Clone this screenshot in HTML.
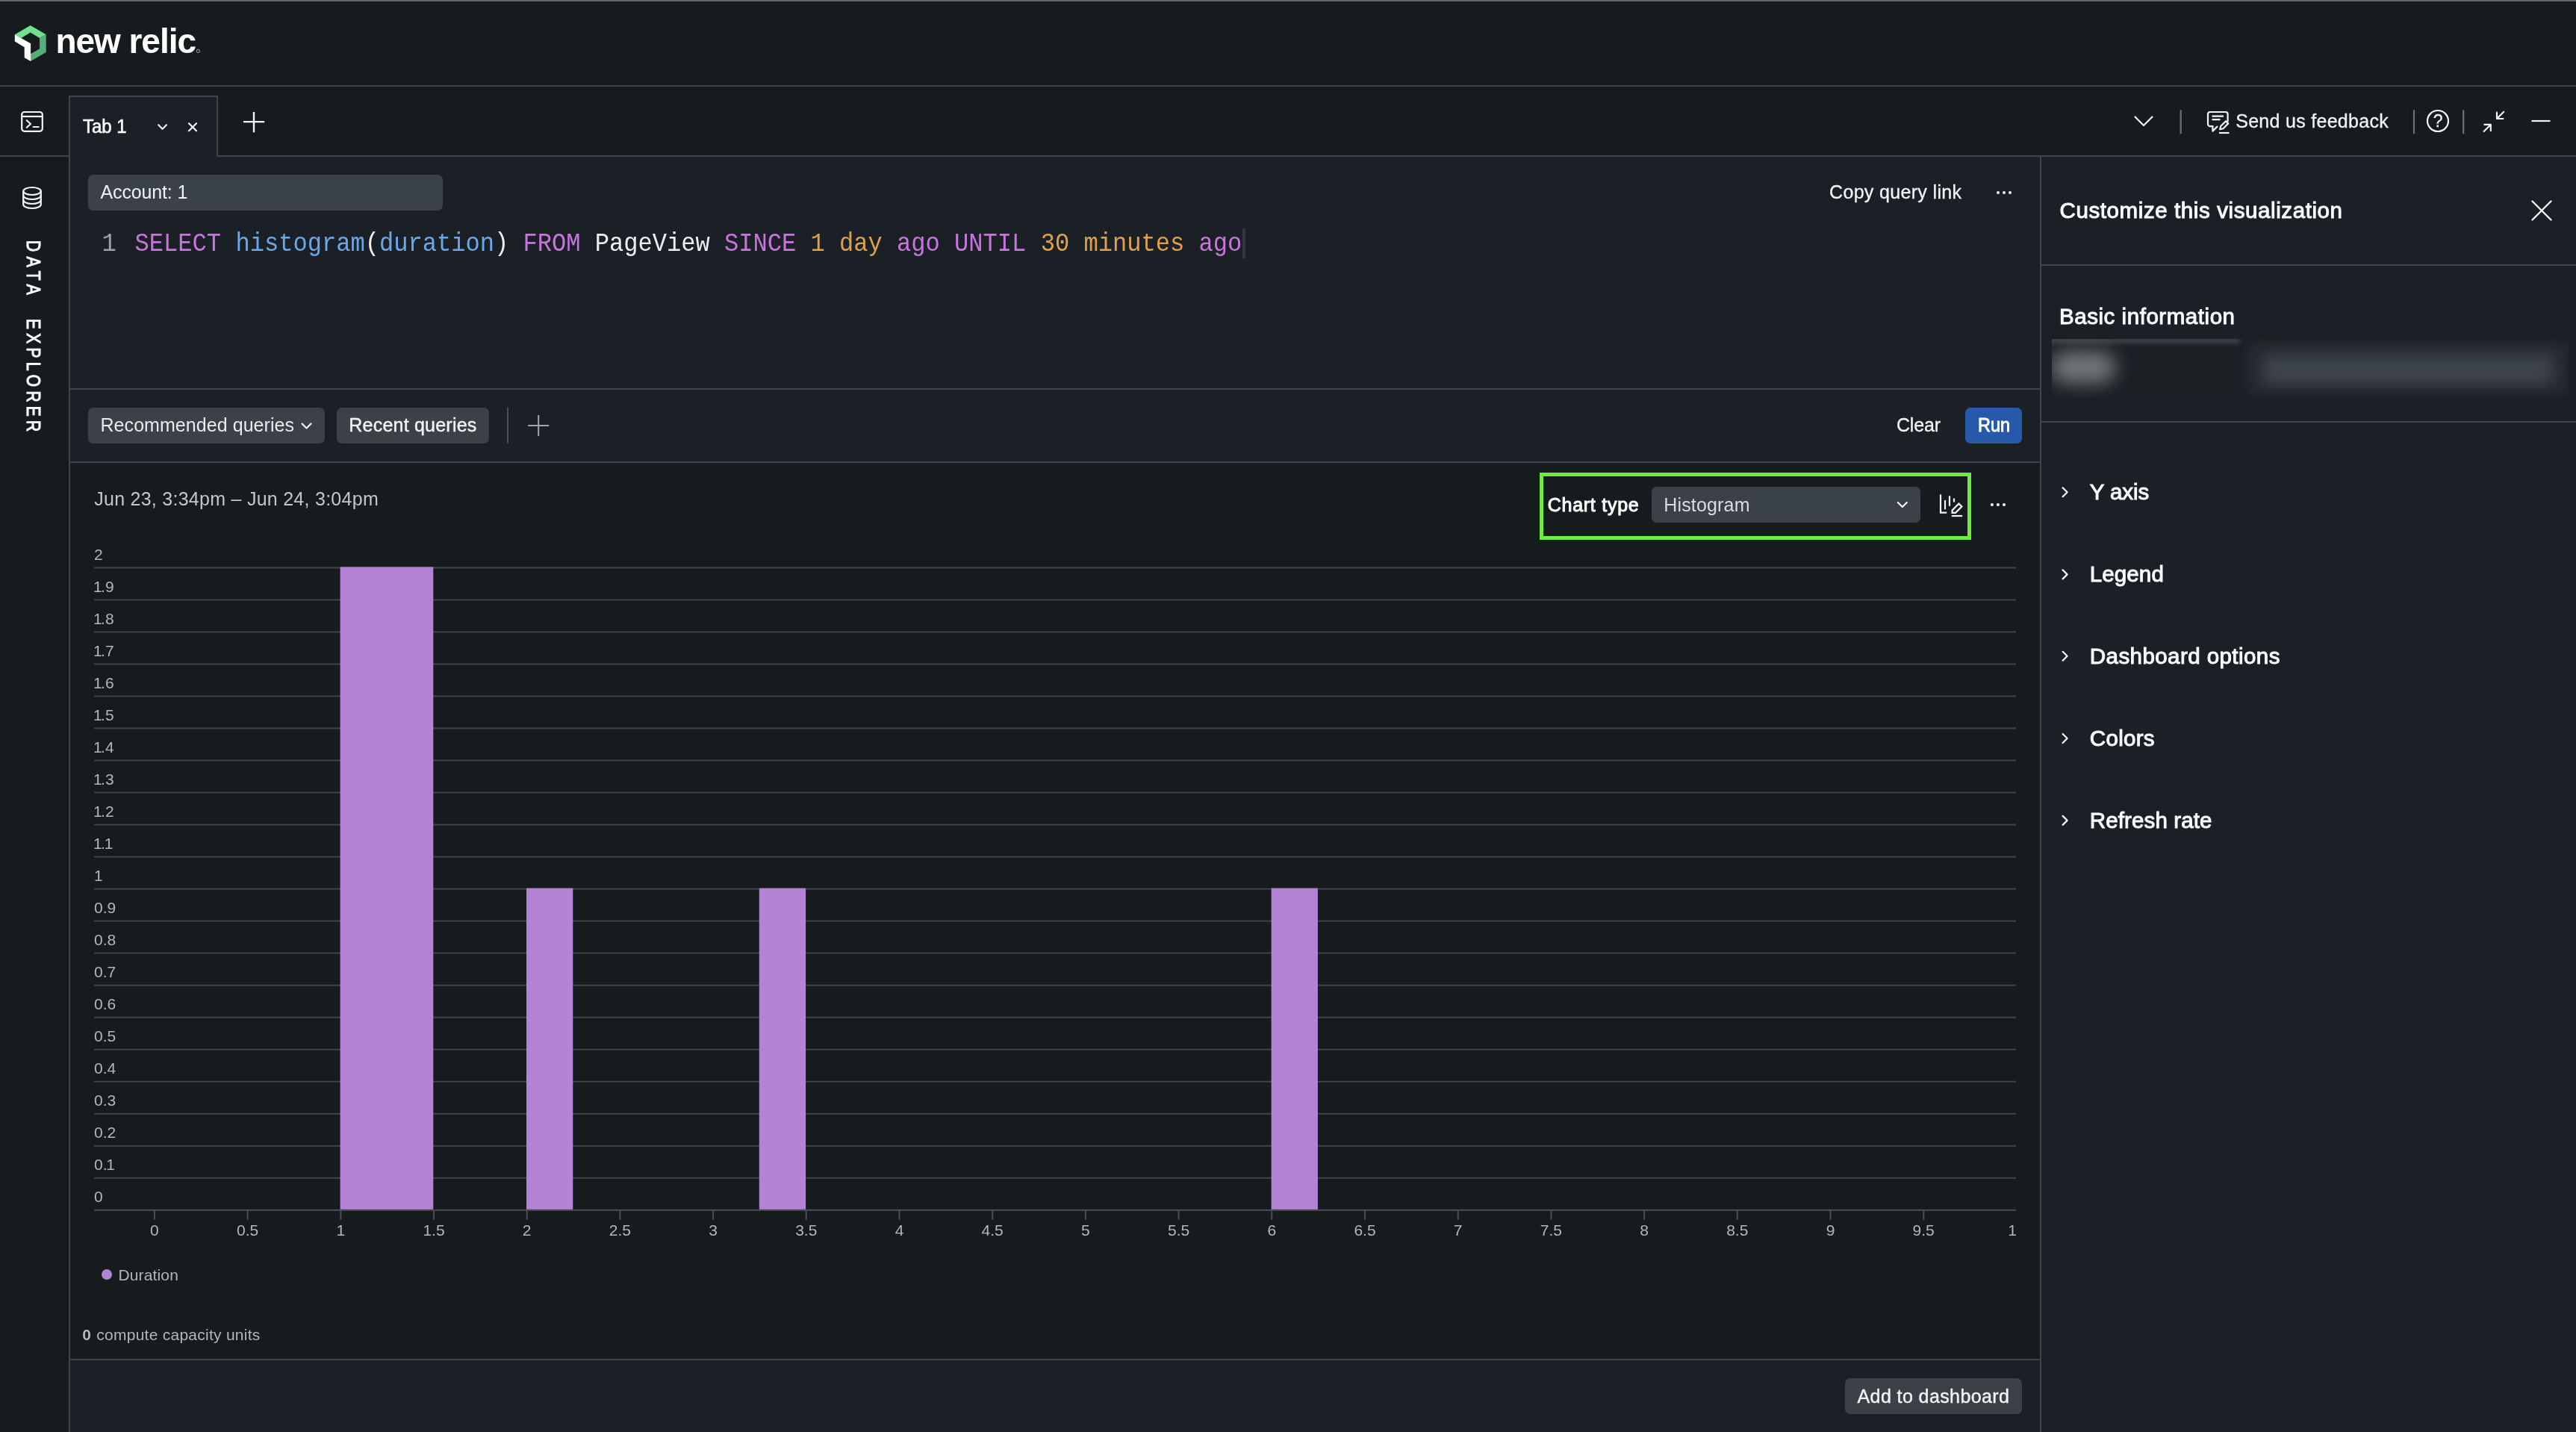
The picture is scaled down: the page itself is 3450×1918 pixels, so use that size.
<!DOCTYPE html>
<html><head><meta charset="utf-8"><title>New Relic - Query builder</title>
<style>
html,body{margin:0;padding:0;}
body{width:3450px;height:1918px;overflow:hidden;background:#161b1e;font-family:"Liberation Sans",sans-serif;position:relative;}
.b{position:absolute;display:block;}
.t{position:absolute;white-space:pre;display:block;}
#tl{position:absolute;left:0;top:0;width:3450px;height:1918px;will-change:transform;}
.code{font-family:"Liberation Mono",monospace;}
.k{color:#c775dc}.f{color:#69a7e8}.p{color:#eceef0}.n{color:#e0a04a}
</style></head><body>
<div class="b" style="left:0px;top:0px;width:3450px;height:1918px;background:#161b1e;"></div>
<div class="b" style="left:0px;top:0px;width:3450px;height:2px;background:#676868;"></div>
<div class="b" style="left:0px;top:2px;width:3450px;height:1px;background:#11161a;"></div>
<div class="b" style="left:0px;top:114px;width:3450px;height:2px;background:#3e434c;"></div>
<div class="b" style="left:0px;top:208px;width:3450px;height:2px;background:#3e434c;"></div>
<div class="b" style="left:94px;top:210px;width:2638px;height:310px;background:#1b2027;"></div>
<div class="b" style="left:94px;top:520px;width:2638px;height:2px;background:#3e434c;"></div>
<div class="b" style="left:94px;top:522px;width:2638px;height:96px;background:#1b2027;"></div>
<div class="b" style="left:94px;top:618px;width:2638px;height:2px;background:#3e434c;"></div>
<div class="b" style="left:94px;top:1820px;width:2638px;height:2px;background:#3e434c;"></div>
<div class="b" style="left:94px;top:1822px;width:2638px;height:96px;background:#1b2027;"></div>
<div class="b" style="left:92px;top:210px;width:2px;height:1708px;background:#3e434c;"></div>
<div class="b" style="left:2734px;top:210px;width:716px;height:1708px;background:#1b2027;"></div>
<div class="b" style="left:2732px;top:210px;width:2px;height:1708px;background:#3e434c;"></div>
<div class="b" style="left:2734px;top:354px;width:716px;height:2px;background:#3e434c;"></div>
<div class="b" style="left:2734px;top:564px;width:716px;height:2px;background:#3e434c;"></div>
<div class="b" style="left:92px;top:128px;width:200px;height:82px;background:#1b2027;box-sizing:border-box;border:2px solid #3e434c;border-bottom:none;"></div>
<svg class="b" style="left:0;top:0" width="300" height="114" viewBox="0 0 300 114">
<polygon points="19.8,46.3 40.7,33.9 61.7,46.3 53.1,50.9 40.7,43.6 28.4,50.9" fill="#70e08f"/>
<polygon points="61.7,46.3 61.7,69.9 40.9,82 40.9,72.2 53.1,65.2 53.1,50.9" fill="#55ae79"/>
<polygon points="19.8,46.3 41.1,58.2 41.1,82 32.7,77.2 32.7,63.2 19.8,55.4" fill="#ffffff"/>
<circle cx="265.4" cy="68.4" r="2.1" fill="none" stroke="#b9bcbe" stroke-width="0.9"/>
</svg>
<svg class="b" style="left:24px;top:145px" width="40" height="36" viewBox="24 145 40 36" fill="none" stroke="#f3f4f5" stroke-width="2.2" stroke-linecap="round" stroke-linejoin="round">
<rect x="29.2" y="150" width="27.6" height="25.8" rx="3.5"/>
<path d="M29.2 156h27.6" stroke-linecap="butt"/>
<path d="M35.8 161.2l5.2 4.8-5.2 4.8M44.6 170h7"/>
</svg>
<svg class="b" style="left:200px;top:150px" width="170" height="40" viewBox="200 150 170 40" fill="none" stroke="#f3f4f5" stroke-width="2.2" stroke-linecap="round" stroke-linejoin="round">
<path d="M212.2 167.3l5.4 5.4 5.4-5.4"/>
<path d="M253 165.2l10 10M263 165.2l-10 10"/>
<path d="M340 149v28.3M325.9 163.1h28.3" stroke-width="2.4" stroke-linecap="butt"/>
</svg>
<svg class="b" style="left:2840px;top:140px" width="600" height="46" viewBox="2840 140 600 46" fill="none" stroke="#f3f4f5" stroke-width="2.2" stroke-linecap="round" stroke-linejoin="round">
<path d="M2859.5 156.5l11.5 11.5 11.5-11.5"/>
<path d="M2920.7 147.2v32M3233 147.2v32M3299.2 147.2v32" stroke="#6c7276" stroke-linecap="butt"/>
<!-- feedback -->
<path d="M2963.4 169.2h-3.4a3 3 0 0 1-3-3v-13.2a3 3 0 0 1 3-3h20.6a3 3 0 0 1 3 3v9.5"/>
<path d="M2963.4 169.2v6.4l6-6"/>
<path d="M2962.5 155.6h15.5M2962.5 160.2h11" stroke-linecap="butt"/>
<path d="M2973.2 173.2l1-4.2 6.8-6.8 3.2 3.2-6.8 6.8z"/>
<path d="M2972 178h13.5" stroke-linecap="butt"/>
<!-- help -->
<circle cx="3265" cy="162" r="14"/>
<!-- collapse -->
<path d="M3353.2 149.8l-9 9M3344 150.6v8.4h8.4"/>
<path d="M3326.6 176l9-9M3335.8 175.2v-8.4h-8.4"/>
<!-- minus -->
<path d="M3390.5 162h25" stroke-linecap="butt"/>
</svg>
<svg class="b" style="left:24px;top:244px" width="40" height="42" viewBox="24 244 40 42" fill="none" stroke="#f3f4f5" stroke-width="2.2" stroke-linecap="round" stroke-linejoin="round">
<ellipse cx="43" cy="256" rx="11.8" ry="5"/>
<path d="M31.2 256v18c0 2.8 5.3 5 11.8 5s11.8-2.2 11.8-5v-18"/>
<path d="M31.2 262c0 2.8 5.3 5 11.8 5s11.8-2.2 11.8-5M31.2 268c0 2.8 5.3 5 11.8 5s11.8-2.2 11.8-5"/>
</svg>
<div class="b" style="left:118px;top:234px;width:475px;height:48px;background:#3b4148;border-radius:7px;"></div>
<svg class="b" style="left:2660px;top:240px" width="50" height="40" viewBox="2660 240 50 40" fill="#f3f4f5"><circle cx="2676" cy="258" r="2"/><circle cx="2684" cy="258" r="2"/><circle cx="2692" cy="258" r="2"/></svg>
<div class="b" style="left:1664.2px;top:306px;width:3.6px;height:40px;background:#33383e;"></div>
<div class="b" style="left:118px;top:546px;width:317px;height:48px;background:#3b4147;border-radius:7px;"></div>
<div class="b" style="left:451px;top:546px;width:204px;height:48px;background:#3b4147;border-radius:7px;"></div>
<div class="b" style="left:679px;top:546px;width:2px;height:48px;background:#4a4f57;"></div>
<svg class="b" style="left:390px;top:540px" width="360" height="60" viewBox="390 540 360 60" fill="none" stroke="#f3f4f5" stroke-width="2.2" stroke-linecap="round" stroke-linejoin="round">
<path d="M404.5 567.5l6 6 6-6"/>
<path d="M721.2 556v28M707.2 570h28" stroke="#a3a7ab" stroke-width="2" stroke-linecap="butt"/>
</svg>
<div class="b" style="left:2632px;top:546px;width:76px;height:48px;background:#2759ab;border-radius:7px;"></div>
<div class="b" style="left:2061.6px;top:633.2px;width:578.8px;height:89.6px;background:transparent;box-sizing:border-box;border:5.4px solid #70ea42;"></div>
<div class="b" style="left:2212px;top:652px;width:360px;height:48px;background:#3b4148;border-radius:7px;"></div>
<svg class="b" style="left:2530px;top:650px" width="170" height="52" viewBox="2530 650 170 52" fill="none" stroke="#f3f4f5" stroke-width="2.2" stroke-linecap="round" stroke-linejoin="round">
<path d="M2541.8 673l6 6 6-6"/>
<path d="M2599 662.2v24.4h8.2" stroke-linecap="butt" stroke-linejoin="miter"/>
<path d="M2605 670v12.2M2611 664.2v13.6M2617 667.6v5" stroke-linecap="butt"/>
<path d="M2614.6 686.8v-3.4l8.8-8.8 3.9 3.9-8.3 8.3z" stroke-width="2.2" stroke-linejoin="miter"/>
<path d="M2613.8 691h14.4" stroke-linecap="butt"/>
<g fill="#f3f4f5" stroke="none"><circle cx="2667.9" cy="676" r="2.1"/><circle cx="2675.9" cy="676" r="2.1"/><circle cx="2684" cy="676" r="2.1"/></g>
</svg>
<svg class="b" style="left:0;top:620px" width="2732" height="1200" viewBox="0 620 2732 1200"><rect x="126" y="1576.8" width="2574" height="2" fill="#40454d"/><rect x="126" y="1533.8" width="2574" height="2" fill="#40454d"/><rect x="126" y="1490.7" width="2574" height="2" fill="#40454d"/><rect x="126" y="1447.7" width="2574" height="2" fill="#40454d"/><rect x="126" y="1404.7" width="2574" height="2" fill="#40454d"/><rect x="126" y="1361.7" width="2574" height="2" fill="#40454d"/><rect x="126" y="1318.7" width="2574" height="2" fill="#40454d"/><rect x="126" y="1275.6" width="2574" height="2" fill="#40454d"/><rect x="126" y="1232.6" width="2574" height="2" fill="#40454d"/><rect x="126" y="1189.6" width="2574" height="2" fill="#40454d"/><rect x="126" y="1146.6" width="2574" height="2" fill="#40454d"/><rect x="126" y="1103.6" width="2574" height="2" fill="#40454d"/><rect x="126" y="1060.5" width="2574" height="2" fill="#40454d"/><rect x="126" y="1017.5" width="2574" height="2" fill="#40454d"/><rect x="126" y="974.5" width="2574" height="2" fill="#40454d"/><rect x="126" y="931.5" width="2574" height="2" fill="#40454d"/><rect x="126" y="888.5" width="2574" height="2" fill="#40454d"/><rect x="126" y="845.4" width="2574" height="2" fill="#40454d"/><rect x="126" y="802.4" width="2574" height="2" fill="#40454d"/><rect x="126" y="759.4" width="2574" height="2" fill="#40454d"/><rect x="126" y="1619.8" width="2574" height="2" fill="#4a4f57"/><rect x="205.9" y="1620.8" width="2" height="13" fill="#4a4f57"/><rect x="330.6" y="1620.8" width="2" height="13" fill="#4a4f57"/><rect x="455.3" y="1620.8" width="2" height="13" fill="#4a4f57"/><rect x="580.0" y="1620.8" width="2" height="13" fill="#4a4f57"/><rect x="704.7" y="1620.8" width="2" height="13" fill="#4a4f57"/><rect x="829.4" y="1620.8" width="2" height="13" fill="#4a4f57"/><rect x="954.1" y="1620.8" width="2" height="13" fill="#4a4f57"/><rect x="1078.8" y="1620.8" width="2" height="13" fill="#4a4f57"/><rect x="1203.5" y="1620.8" width="2" height="13" fill="#4a4f57"/><rect x="1328.2" y="1620.8" width="2" height="13" fill="#4a4f57"/><rect x="1452.9" y="1620.8" width="2" height="13" fill="#4a4f57"/><rect x="1577.6" y="1620.8" width="2" height="13" fill="#4a4f57"/><rect x="1702.3" y="1620.8" width="2" height="13" fill="#4a4f57"/><rect x="1827.0" y="1620.8" width="2" height="13" fill="#4a4f57"/><rect x="1951.7" y="1620.8" width="2" height="13" fill="#4a4f57"/><rect x="2076.4" y="1620.8" width="2" height="13" fill="#4a4f57"/><rect x="2201.1" y="1620.8" width="2" height="13" fill="#4a4f57"/><rect x="2325.8" y="1620.8" width="2" height="13" fill="#4a4f57"/><rect x="2450.5" y="1620.8" width="2" height="13" fill="#4a4f57"/><rect x="2575.2" y="1620.8" width="2" height="13" fill="#4a4f57"/><rect x="455.6" y="759.4" width="124.7" height="860.4" fill="#b583d6"/><rect x="705.0" y="1189.6" width="62.3" height="430.2" fill="#b583d6"/><rect x="1016.8" y="1189.6" width="62.3" height="430.2" fill="#b583d6"/><rect x="1702.6" y="1189.6" width="62.3" height="430.2" fill="#b583d6"/></svg>
<div class="b" style="left:135.5px;top:1700px;width:14px;height:14px;border-radius:7px;background:#b583d6;"></div>
<div class="b" style="left:2471px;top:1846px;width:237px;height:48px;background:#3b4147;border-radius:7px;"></div>
<svg class="b" style="left:3380px;top:258px" width="50" height="50" viewBox="3380 258 50 50" fill="none" stroke="#f3f4f5" stroke-width="2.4" stroke-linecap="round"><path d="M3391.5 269.5l25 25M3416.5 269.5l-25 25"/></svg>
<div class="b" style="left:2748px;top:454px;width:692px;height:78px;background:#1a1f24;overflow:hidden;">
<div class="b" style="left:-10px;top:-3px;width:262px;height:9px;background:#3e4347;filter:blur(3px);"></div>
<div class="b" style="left:-2px;top:17px;width:88px;height:42px;border-radius:21px;background:#77797b;filter:blur(13px);"></div>
<div class="b" style="left:262px;top:4px;width:430px;height:70px;background:#262c30;filter:blur(8px);"></div>
<div class="b" style="left:284px;top:22px;width:386px;height:38px;border-radius:8px;background:#3e444c;filter:blur(9px);"></div>
</div>
<svg class="b" style="left:2750px;top:620px" width="40" height="520" viewBox="2750 620 40 520" fill="none" stroke="#f3f4f5" stroke-width="2.2" stroke-linecap="round" stroke-linejoin="round"><path d="M2762.6 653.2l6 6-6 6"/><path d="M2762.6 763.4l6 6-6 6"/><path d="M2762.6 872.8l6 6-6 6"/><path d="M2762.6 983.0l6 6-6 6"/><path d="M2762.6 1092.9l6 6-6 6"/></svg>
<div id="tl">
<span class="t" style="left:74.40px;top:31.76px;font-size:46px;line-height:46px;color:#ffffff;font-weight:700;letter-spacing:-1.033px;">new relic</span>
<span class="t" style="left:110.80px;top:156.64px;font-size:25px;line-height:25px;color:#fafbfb;-webkit-text-stroke:0.6px #fafbfb;transform-origin:0 0;transform:scaleX(0.9566);">Tab 1</span>
<span class="t" style="left:3258.70px;top:150.83px;font-size:23px;line-height:23px;color:#f3f4f5;-webkit-text-stroke:0.3px #f3f4f5;">?</span>
<span class="t" style="left:2994.20px;top:150.04px;font-size:25px;line-height:25px;color:#f3f4f5;letter-spacing:0.291px;-webkit-text-stroke:0.3px #f3f4f5;">Send us feedback</span>
<span class="t" style="left:56.8px;top:322.2px;letter-spacing:8.1px;font-size:25.5px;line-height:25.5px;color:#fafbfb;-webkit-text-stroke:1.1px #fafbfb;transform-origin:0 0;transform:rotate(90deg) scaleX(0.82);">DATA</span>
<span class="t" style="left:56.8px;top:426.6px;letter-spacing:6.5px;font-size:25.5px;line-height:25.5px;color:#fafbfb;-webkit-text-stroke:1.1px #fafbfb;transform-origin:0 0;transform:rotate(90deg) scaleX(0.82);">EXPLORER</span>
<span class="t" style="left:134.50px;top:245.04px;font-size:25px;line-height:25px;color:#f0f1f2;letter-spacing:-0.147px;">Account: 1</span>
<span class="t" style="left:2450.00px;top:245.44px;font-size:25px;line-height:25px;color:#f3f4f5;letter-spacing:0.336px;-webkit-text-stroke:0.3px #f3f4f5;">Copy query link</span>
<span class="t code" style="left:136.5px;color:#9ea2a8;top:312.11px;font-size:32.1px;line-height:32.1px;transform-origin:0 24.59px;transform:scale(1,1.1);">1</span>
<span class="t code" style="left:180.6px;top:312.11px;font-size:32.1px;line-height:32.1px;transform-origin:0 24.59px;transform:scale(1,1.1);"><span class="k">SELECT</span> <span class="f">histogram</span><span class="p">(</span><span class="f">duration</span><span class="p">)</span> <span class="k">FROM</span> <span class="p">PageView</span> <span class="k">SINCE</span> <span class="n">1 day</span> <span class="k">ago</span> <span class="k">UNTIL</span> <span class="n">30 minutes</span> <span class="k">ago</span></span>
<span class="t" style="left:134.50px;top:557.44px;font-size:25px;line-height:25px;color:#e8eaec;letter-spacing:0.058px;">Recommended queries</span>
<span class="t" style="left:467.30px;top:557.44px;font-size:25px;line-height:25px;color:#f3f4f5;letter-spacing:0.219px;-webkit-text-stroke:0.4px #f3f4f5;">Recent queries</span>
<span class="t" style="left:2540.00px;top:557.44px;font-size:25px;line-height:25px;color:#f3f4f5;letter-spacing:-0.185px;-webkit-text-stroke:0.3px #f3f4f5;">Clear</span>
<span class="t" style="left:2648.70px;top:557.44px;font-size:25px;line-height:25px;color:#ffffff;-webkit-text-stroke:0.9px #ffffff;transform-origin:0 0;transform:scaleX(0.9376);">Run</span>
<span class="t" style="left:126.20px;top:656.14px;font-size:25px;line-height:25px;color:#c3c6ca;letter-spacing:0.268px;">Jun 23, 3:34pm – Jun 24, 3:04pm</span>
<span class="t" style="left:2072.70px;top:663.54px;font-size:25px;line-height:25px;color:#fafbfb;letter-spacing:0.741px;-webkit-text-stroke:1.0px #fafbfb;">Chart type</span>
<span class="t" style="left:2228.20px;top:663.54px;font-size:25px;line-height:25px;color:#d9dcdf;letter-spacing:0.173px;">Histogram</span>
<span class="t" style="left:126.00px;top:1592.22px;font-size:21px;line-height:21px;color:#b3b7ba;">0</span>
<span class="t" style="left:126.00px;top:1549.20px;font-size:21px;line-height:21px;color:#b3b7ba;">0.<span style="letter-spacing:-1.6px;margin-left:-1.2px">1</span></span>
<span class="t" style="left:126.00px;top:1506.18px;font-size:21px;line-height:21px;color:#b3b7ba;">0.2</span>
<span class="t" style="left:126.00px;top:1463.16px;font-size:21px;line-height:21px;color:#b3b7ba;">0.3</span>
<span class="t" style="left:126.00px;top:1420.14px;font-size:21px;line-height:21px;color:#b3b7ba;">0.4</span>
<span class="t" style="left:126.00px;top:1377.12px;font-size:21px;line-height:21px;color:#b3b7ba;">0.5</span>
<span class="t" style="left:126.00px;top:1334.10px;font-size:21px;line-height:21px;color:#b3b7ba;">0.6</span>
<span class="t" style="left:126.00px;top:1291.08px;font-size:21px;line-height:21px;color:#b3b7ba;">0.7</span>
<span class="t" style="left:126.00px;top:1248.06px;font-size:21px;line-height:21px;color:#b3b7ba;">0.8</span>
<span class="t" style="left:126.00px;top:1205.04px;font-size:21px;line-height:21px;color:#b3b7ba;">0.9</span>
<span class="t" style="left:126.00px;top:1162.02px;font-size:21px;line-height:21px;color:#b3b7ba;">1</span>
<span class="t" style="left:126.00px;top:1119.00px;font-size:21px;line-height:21px;color:#b3b7ba;"><span style="letter-spacing:-1.6px;margin-left:-1px">1</span>.<span style="letter-spacing:-1.6px;margin-left:-1.2px">1</span></span>
<span class="t" style="left:126.00px;top:1075.98px;font-size:21px;line-height:21px;color:#b3b7ba;"><span style="letter-spacing:-1.6px;margin-left:-1px">1</span>.2</span>
<span class="t" style="left:126.00px;top:1032.96px;font-size:21px;line-height:21px;color:#b3b7ba;"><span style="letter-spacing:-1.6px;margin-left:-1px">1</span>.3</span>
<span class="t" style="left:126.00px;top:989.94px;font-size:21px;line-height:21px;color:#b3b7ba;"><span style="letter-spacing:-1.6px;margin-left:-1px">1</span>.4</span>
<span class="t" style="left:126.00px;top:946.92px;font-size:21px;line-height:21px;color:#b3b7ba;"><span style="letter-spacing:-1.6px;margin-left:-1px">1</span>.5</span>
<span class="t" style="left:126.00px;top:903.90px;font-size:21px;line-height:21px;color:#b3b7ba;"><span style="letter-spacing:-1.6px;margin-left:-1px">1</span>.6</span>
<span class="t" style="left:126.00px;top:860.88px;font-size:21px;line-height:21px;color:#b3b7ba;"><span style="letter-spacing:-1.6px;margin-left:-1px">1</span>.7</span>
<span class="t" style="left:126.00px;top:817.86px;font-size:21px;line-height:21px;color:#b3b7ba;"><span style="letter-spacing:-1.6px;margin-left:-1px">1</span>.8</span>
<span class="t" style="left:126.00px;top:774.84px;font-size:21px;line-height:21px;color:#b3b7ba;"><span style="letter-spacing:-1.6px;margin-left:-1px">1</span>.9</span>
<span class="t" style="left:126.00px;top:731.82px;font-size:21px;line-height:21px;color:#b3b7ba;">2</span>
<div class="b" style="left:0;top:1630px;width:2700px;height:40px;overflow:hidden;">
<span class="t" style="left:201.06px;top:7.22px;font-size:21px;line-height:21px;color:#b3b7ba;">0</span>
<span class="t" style="left:317.00px;top:7.22px;font-size:21px;line-height:21px;color:#b3b7ba;">0.5</span>
<span class="t" style="left:450.46px;top:7.22px;font-size:21px;line-height:21px;color:#b3b7ba;">1</span>
<span class="t" style="left:566.40px;top:7.22px;font-size:21px;line-height:21px;color:#b3b7ba;">1.5</span>
<span class="t" style="left:699.86px;top:7.22px;font-size:21px;line-height:21px;color:#b3b7ba;">2</span>
<span class="t" style="left:815.80px;top:7.22px;font-size:21px;line-height:21px;color:#b3b7ba;">2.5</span>
<span class="t" style="left:949.26px;top:7.22px;font-size:21px;line-height:21px;color:#b3b7ba;">3</span>
<span class="t" style="left:1065.20px;top:7.22px;font-size:21px;line-height:21px;color:#b3b7ba;">3.5</span>
<span class="t" style="left:1198.66px;top:7.22px;font-size:21px;line-height:21px;color:#b3b7ba;">4</span>
<span class="t" style="left:1314.60px;top:7.22px;font-size:21px;line-height:21px;color:#b3b7ba;">4.5</span>
<span class="t" style="left:1448.06px;top:7.22px;font-size:21px;line-height:21px;color:#b3b7ba;">5</span>
<span class="t" style="left:1564.00px;top:7.22px;font-size:21px;line-height:21px;color:#b3b7ba;">5.5</span>
<span class="t" style="left:1697.46px;top:7.22px;font-size:21px;line-height:21px;color:#b3b7ba;">6</span>
<span class="t" style="left:1813.40px;top:7.22px;font-size:21px;line-height:21px;color:#b3b7ba;">6.5</span>
<span class="t" style="left:1946.86px;top:7.22px;font-size:21px;line-height:21px;color:#b3b7ba;">7</span>
<span class="t" style="left:2062.80px;top:7.22px;font-size:21px;line-height:21px;color:#b3b7ba;">7.5</span>
<span class="t" style="left:2196.26px;top:7.22px;font-size:21px;line-height:21px;color:#b3b7ba;">8</span>
<span class="t" style="left:2312.20px;top:7.22px;font-size:21px;line-height:21px;color:#b3b7ba;">8.5</span>
<span class="t" style="left:2445.66px;top:7.22px;font-size:21px;line-height:21px;color:#b3b7ba;">9</span>
<span class="t" style="left:2561.60px;top:7.22px;font-size:21px;line-height:21px;color:#b3b7ba;">9.5</span>
<span class="t" style="left:2689.22px;top:7.22px;font-size:21px;line-height:21px;color:#b3b7ba;">10</span>
</div>
<span class="t" style="left:158.40px;top:1697.42px;font-size:21px;line-height:21px;color:#b3b7ba;letter-spacing:0.160px;">Duration</span>
<span class="t" style="left:110.20px;top:1777.42px;font-size:21px;line-height:21px;color:#b3b7ba;font-weight:700;">0</span>
<span class="t" style="left:129.30px;top:1777.42px;font-size:21px;line-height:21px;color:#b3b7ba;letter-spacing:0.256px;">compute capacity units</span>
<span class="t" style="left:2487.50px;top:1857.54px;font-size:25px;line-height:25px;color:#f3f4f5;letter-spacing:0.409px;-webkit-text-stroke:0.4px #f3f4f5;">Add to dashboard</span>
<span class="t" style="left:2758.50px;top:267.43px;font-size:29.5px;line-height:29.5px;color:#fafbfb;letter-spacing:0.599px;-webkit-text-stroke:1.0px #fafbfb;">Customize this visualization</span>
<span class="t" style="left:2758.00px;top:408.73px;font-size:29.5px;line-height:29.5px;color:#fafbfb;letter-spacing:0.546px;-webkit-text-stroke:1.0px #fafbfb;">Basic information</span>
<span class="t" style="left:2798.80px;top:644.03px;font-size:29.5px;line-height:29.5px;color:#fafbfb;letter-spacing:-0.060px;-webkit-text-stroke:1.0px #fafbfb;">Y axis</span>
<span class="t" style="left:2798.80px;top:754.23px;font-size:29.5px;line-height:29.5px;color:#fafbfb;letter-spacing:0.113px;-webkit-text-stroke:1.0px #fafbfb;">Legend</span>
<span class="t" style="left:2798.80px;top:863.63px;font-size:29.5px;line-height:29.5px;color:#fafbfb;letter-spacing:0.435px;-webkit-text-stroke:1.0px #fafbfb;">Dashboard options</span>
<span class="t" style="left:2798.80px;top:973.83px;font-size:29.5px;line-height:29.5px;color:#fafbfb;letter-spacing:0.311px;-webkit-text-stroke:1.0px #fafbfb;">Colors</span>
<span class="t" style="left:2798.80px;top:1083.73px;font-size:29.5px;line-height:29.5px;color:#fafbfb;letter-spacing:0.116px;-webkit-text-stroke:1.0px #fafbfb;">Refresh rate</span>
</div>
</body></html>
